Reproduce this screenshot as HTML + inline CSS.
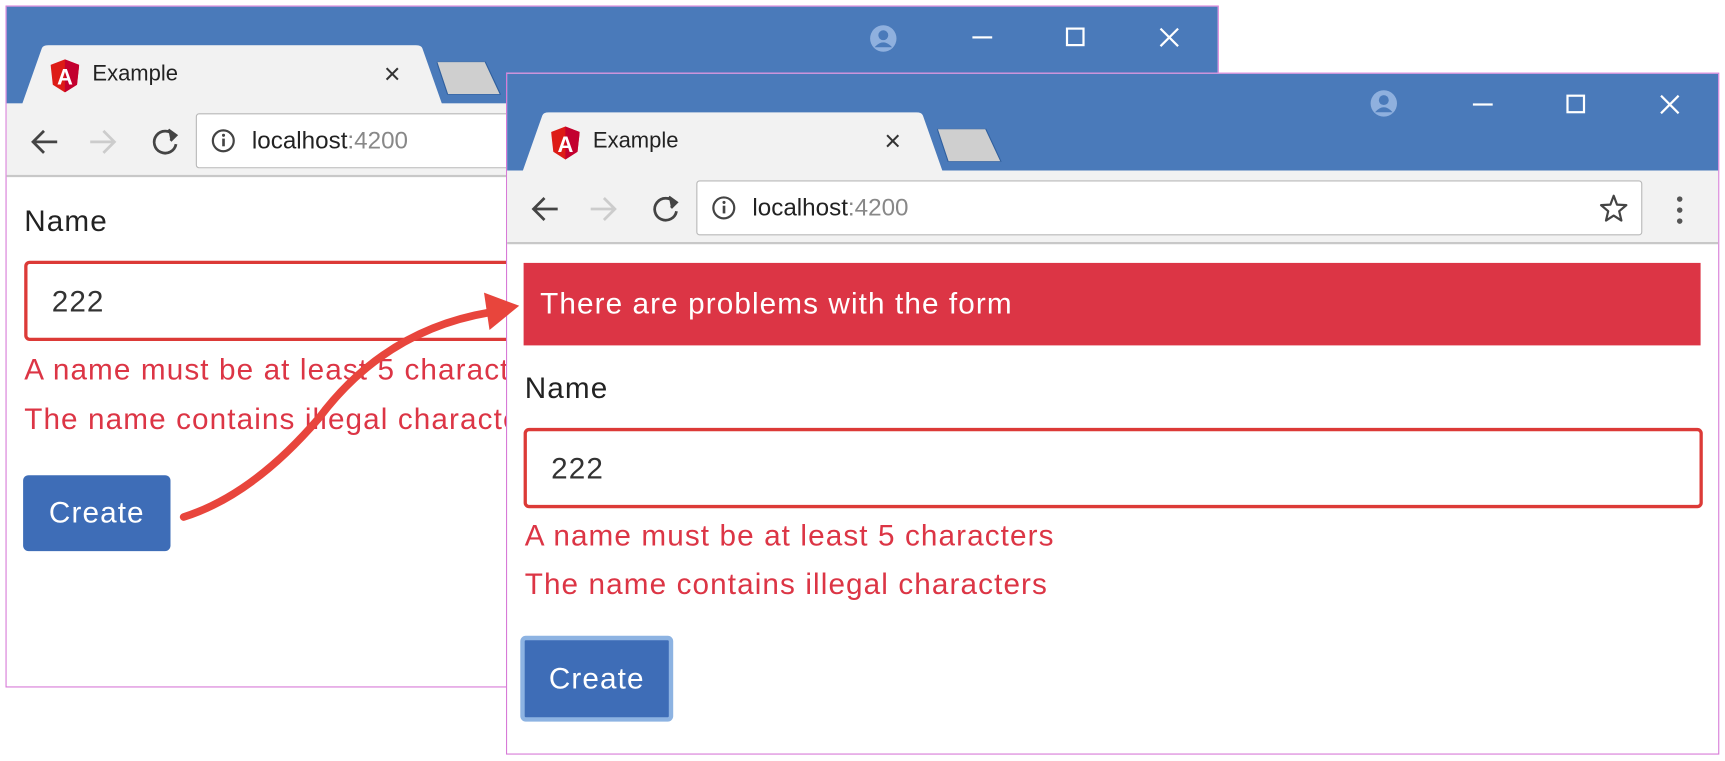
<!DOCTYPE html>
<html><head><meta charset="utf-8"><style>
*{margin:0;padding:0;box-sizing:border-box}
body{width:1725px;height:761px;background:#fff;overflow:hidden;font-family:"Liberation Sans",sans-serif}
#s{position:absolute;left:0;top:0;width:1568px;height:692px;transform:scale(1.1);transform-origin:0 0}
.win{position:absolute;width:1103px;height:620px;border:1.5px solid #d77ad7;background:#fff;overflow:hidden}
.title{position:absolute;left:0;top:0;width:100%;height:88px;background:#4a7aba}
.tool{position:absolute;left:0;top:88px;width:100%;height:67px;background:#f2f2f2;border-bottom:2px solid #c8c8c8}
.tab{position:absolute;left:14px;top:35px;width:382px;height:54px}
.itab{position:absolute;left:391px;top:50px;width:60px;height:30px}
.tabt{position:absolute;left:78px;top:50px;font-size:20px;color:#222}
.tabx{position:absolute;left:343px;top:46px;font-size:26px;color:#333}
.addr{position:absolute;left:172px;top:97px;width:860px;height:50px;background:#fff;border:1.5px solid #b8b8b8;border-radius:3px}
.url{position:absolute;left:50px;top:11px;font-size:22px;color:#222}
.url span{color:#888}
.c{position:absolute;font-size:27px;letter-spacing:1px;white-space:nowrap}
.lab{color:#222}
.inp{position:absolute;height:73px;border:3px solid #dc3a37;border-radius:5px}
.inp span{position:absolute;left:22px;top:19px;font-size:27px;letter-spacing:1px;color:#333}
.err{color:#dc3545}
.btn{position:absolute;background:#3e6db7;color:#fff;font-size:27px;letter-spacing:1px;border-radius:5px;text-align:center}
</style></head><body><div id="s">

<!-- back window -->
<div class="win" style="left:5px;top:5px">
 <div class="title"></div>
 <svg class="tab" viewBox="0 0 382 54"><path d="M0 54 L18 3 Q19 0 24 0 L358 0 Q363 0 364 3 L382 54Z" fill="#f2f2f2"/></svg>
 <svg class="itab" viewBox="0 0 60 30"><path d="M0 0 L44 0 L58 30 L10 30Z" fill="#cfcfcf" stroke="#2f5f9e" stroke-width="1"/></svg>
 <svg style="position:absolute;left:40px;top:48px" width="26" height="30" viewBox="0 0 26 30"><path d="M13 0 L26 5 L24 23 L13 30 L2 23 L0 5Z" fill="#dd1b16"/><path d="M13 0 L26 5 L24 23 L13 30Z" fill="#c3002f"/><text x="13" y="23" text-anchor="middle" font-size="20" fill="#fff" font-family="Liberation Sans" font-weight="bold">A</text></svg>
 <div class="tabt">Example</div><div class="tabx">×</div>
 <svg style="position:absolute;left:784px;top:16px" width="26" height="26"><circle cx="13" cy="13" r="12" fill="#8fb0de"/><circle cx="13" cy="10" r="4.5" fill="#4a7aba"/><path d="M5 21 Q13 12 21 21" fill="#4a7aba"/></svg>
 <div style="position:absolute;left:878px;top:27px;width:18px;height:2px;background:#fff"></div>
 <div style="position:absolute;left:963px;top:19px;width:17px;height:17px;border:2px solid #fff"></div>
 <svg style="position:absolute;left:1047px;top:18px" width="20" height="20"><path d="M2 2L18 18M18 2L2 18" stroke="#fff" stroke-width="2"/></svg>
 <div class="tool"></div>
 <svg style="position:absolute;left:20px;top:108px" width="160" height="30" fill="none" stroke-width="2.5"><path d="M26 15H4M14 5L4 15L14 25" stroke="#444"/><path d="M56 15H78M68 5L78 15L68 25" stroke="#ccc"/><path d="M132 9A10 10 0 1 0 134 17" stroke="#444"/><path d="M127 4L134 9L129 14" stroke="#444" fill="#444"/></svg>
 <div class="addr"><svg style="position:absolute;left:13px;top:13px" width="22" height="22"><circle cx="11" cy="11" r="9.5" fill="none" stroke="#444" stroke-width="2"/><rect x="10" y="9" width="2.4" height="7" fill="#444"/><circle cx="11.2" cy="6" r="1.4" fill="#444"/></svg><div class="url">localhost<span>:4200</span></div></div>
 <div class="c lab" style="left:16px;top:180px">Name</div>
 <div class="inp" style="left:16px;top:231px;width:1100px"><span>222</span></div>
 <div class="c err" style="left:16px;top:315px">A name must be at least 5 characters</div>
 <div class="c err" style="left:16px;top:360px">The name contains illegal characters</div>
 <div class="btn" style="left:15px;top:426px;width:134px;height:69px;line-height:69px">Create</div>
</div>

<!-- front window -->
<div class="win" style="left:460px;top:66px">
 <div class="title"></div>
 <svg class="tab" viewBox="0 0 382 54"><path d="M0 54 L18 3 Q19 0 24 0 L358 0 Q363 0 364 3 L382 54Z" fill="#f2f2f2"/></svg>
 <svg class="itab" viewBox="0 0 60 30"><path d="M0 0 L44 0 L58 30 L10 30Z" fill="#cfcfcf" stroke="#2f5f9e" stroke-width="1"/></svg>
 <svg style="position:absolute;left:40px;top:48px" width="26" height="30" viewBox="0 0 26 30"><path d="M13 0 L26 5 L24 23 L13 30 L2 23 L0 5Z" fill="#dd1b16"/><path d="M13 0 L26 5 L24 23 L13 30Z" fill="#c3002f"/><text x="13" y="23" text-anchor="middle" font-size="20" fill="#fff" font-family="Liberation Sans" font-weight="bold">A</text></svg>
 <div class="tabt">Example</div><div class="tabx">×</div>
 <svg style="position:absolute;left:784px;top:14px" width="26" height="26"><circle cx="13" cy="13" r="12" fill="#8fb0de"/><circle cx="13" cy="10" r="4.5" fill="#4a7aba"/><path d="M5 21 Q13 12 21 21" fill="#4a7aba"/></svg>
 <div style="position:absolute;left:878px;top:27px;width:18px;height:2px;background:#fff"></div>
 <div style="position:absolute;left:963px;top:19px;width:17px;height:17px;border:2px solid #fff"></div>
 <svg style="position:absolute;left:1047px;top:18px" width="20" height="20"><path d="M2 2L18 18M18 2L2 18" stroke="#fff" stroke-width="2"/></svg>
 <div class="tool"></div>
 <svg style="position:absolute;left:20px;top:108px" width="160" height="30" fill="none" stroke-width="2.5"><path d="M26 15H4M14 5L4 15L14 25" stroke="#444"/><path d="M56 15H78M68 5L78 15L68 25" stroke="#ccc"/><path d="M132 9A10 10 0 1 0 134 17" stroke="#444"/><path d="M127 4L134 9L129 14" stroke="#444" fill="#444"/></svg>
 <div class="addr"><svg style="position:absolute;left:13px;top:13px" width="22" height="22"><circle cx="11" cy="11" r="9.5" fill="none" stroke="#444" stroke-width="2"/><rect x="10" y="9" width="2.4" height="7" fill="#444"/><circle cx="11.2" cy="6" r="1.4" fill="#444"/></svg><div class="url">localhost<span>:4200</span></div>
  <svg style="position:absolute;left:820px;top:11px" width="26" height="26"><path d="M13 2L16 10L24.5 10.5L18 16L20 24.5L13 20L6 24.5L8 16L1.5 10.5L10 10Z" fill="none" stroke="#444" stroke-width="2" stroke-linejoin="round"/></svg></div>
 <svg style="position:absolute;left:1062px;top:110px" width="8" height="28"><circle cx="4" cy="4" r="2.5" fill="#555"/><circle cx="4" cy="14" r="2.5" fill="#555"/><circle cx="4" cy="24" r="2.5" fill="#555"/></svg>
 <div style="position:absolute;left:15px;top:172px;width:1070px;height:75px;background:#dc3545"></div>
 <div class="c" style="left:30px;top:194px;color:#fff">There are problems with the form</div>
 <div class="c lab" style="left:16px;top:271px">Name</div>
 <div class="inp" style="left:15px;top:322px;width:1072px"><span>222</span></div>
 <div class="c err" style="left:16px;top:405px">A name must be at least 5 characters</div>
 <div class="c err" style="left:16px;top:449px">The name contains illegal characters</div>
 <div class="btn" style="left:12px;top:511px;width:139px;height:78px;line-height:70px;border:4px solid #8db3e2">Create</div>
</div>

<!-- arrow -->
<svg style="position:absolute;left:0;top:0" width="1568" height="692"><path d="M167 470 Q230 450 290 380 Q350 300 445 284" fill="none" stroke="#e8453c" stroke-width="7" stroke-linecap="round"/><path d="M440 266 L472 278 L445 300Z" fill="#e8453c"/></svg>
</div></body></html>
